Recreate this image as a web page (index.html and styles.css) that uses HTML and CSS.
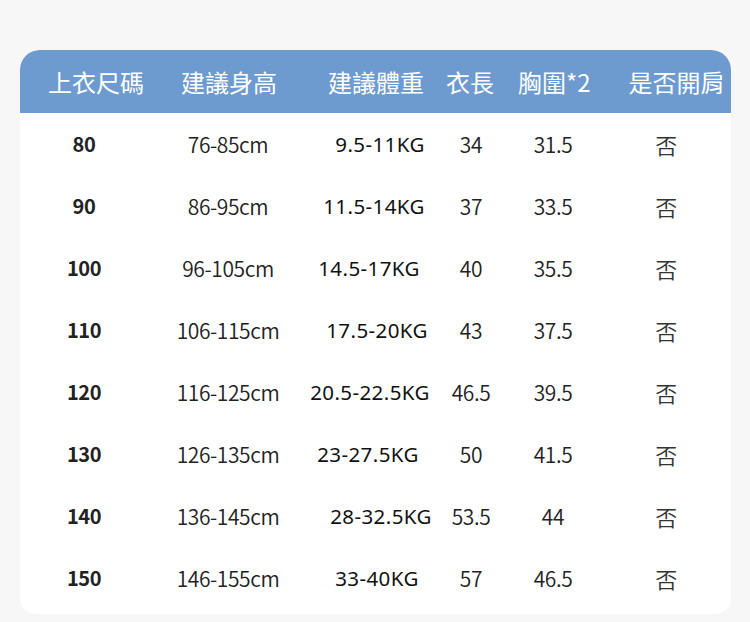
FILE: index.html
```html
<!DOCTYPE html>
<html lang="zh-Hant">
<head>
<meta charset="utf-8">
<title>尺碼表</title>
<link rel="stylesheet" href="styles.css">
</head>
<body>
<div class="page">
  <div class="card">
    <div class="head">
      <span class="h h1">上衣尺碼</span>
      <span class="h h2">建議身高</span>
      <span class="h h3">建議體重</span>
      <span class="h h4">衣長</span>
      <span class="h h5">胸圍*2</span>
      <span class="h h6">是否開肩</span>
    </div>
    <div class="body">
      <div class="row"><span class="c size">80</span><span class="c">76-85cm</span><span class="c wt r6">9.5-11KG</span><span class="c">34</span><span class="c">31.5</span><span class="c no">否</span></div>
      <div class="row"><span class="c size">90</span><span class="c">86-95cm</span><span class="c wt">11.5-14KG</span><span class="c">37</span><span class="c">33.5</span><span class="c no">否</span></div>
      <div class="row"><span class="c size">100</span><span class="c">96-105cm</span><span class="c wt l5">14.5-17KG</span><span class="c">40</span><span class="c">35.5</span><span class="c no">否</span></div>
      <div class="row"><span class="c size">110</span><span class="c">106-115cm</span><span class="c wt r3">17.5-20KG</span><span class="c">43</span><span class="c">37.5</span><span class="c no">否</span></div>
      <div class="row"><span class="c size">120</span><span class="c">116-125cm</span><span class="c wt l4">20.5-22.5KG</span><span class="c">46.5</span><span class="c">39.5</span><span class="c no">否</span></div>
      <div class="row"><span class="c size">130</span><span class="c">126-135cm</span><span class="c wt l6">23-27.5KG</span><span class="c">50</span><span class="c">41.5</span><span class="c no">否</span></div>
      <div class="row"><span class="c size">140</span><span class="c">136-145cm</span><span class="c wt r7">28-32.5KG</span><span class="c">53.5</span><span class="c">44</span><span class="c no">否</span></div>
      <div class="row"><span class="c size">150</span><span class="c">146-155cm</span><span class="c wt r3">33-40KG</span><span class="c">57</span><span class="c">46.5</span><span class="c no">否</span></div>
    </div>
  </div>
</div>
</body>
</html>
```
FILE: styles.css
```css
* { box-sizing: border-box; }
html, body { margin: 0; padding: 0; }
body {
  background: #f7f7f7;
  width: 750px;
  height: 622px;
  overflow: hidden;
  font-family: "Noto Sans CJK TC", "Noto Sans CJK SC", sans-serif;
  color: #222;
}
.page {
  padding: 50px 19px 0 20px;
}
.card {
  width: 711px;
  height: 564px;
  background: #fff;
  border-radius: 20px 20px 16px 16px;
  overflow: hidden;
}
.head {
  height: 63px;
  background: #6d9bcf;
  display: flex;
  align-items: center;
  padding-left: 28px;
  color: #fff;
  font-size: 24px;
  font-weight: 400;
  line-height: 1;
}
.h { white-space: nowrap; }
.h2 { margin-left: 37px; }
.h3 { margin-left: 51px; }
.h4 { margin-left: 22px; }
.h5 { margin-left: 24px; }
.h6 { margin-left: 38px; }
.body {
  padding-top: 0;
}
.row {
  height: 62px;
  display: grid;
  grid-template-columns: 128px 160px 132px 62px 102px 124px;
  align-items: center;
  font-size: 21px;
  font-weight: 350;
  line-height: 1;
}
.c {
  display: flex;
  justify-content: center;
  white-space: nowrap;
  letter-spacing: -0.4px;
}
.size { font-weight: 700; font-size: 20px; }
.wt {
  font-family: "Noto Sans", sans-serif;
  font-weight: 400;
  font-size: 20.5px;
  letter-spacing: 0.4px;
  color: #111;
}
.no { color: #333; font-size: 22px; }
.r3 { padding-left: 6px; }
.r6 { padding-left: 12px; }
.r7 { padding-left: 14px; }
.l4 { padding-right: 8px; }
.l5 { padding-right: 10px; }
.l6 { padding-right: 12px; }
```
